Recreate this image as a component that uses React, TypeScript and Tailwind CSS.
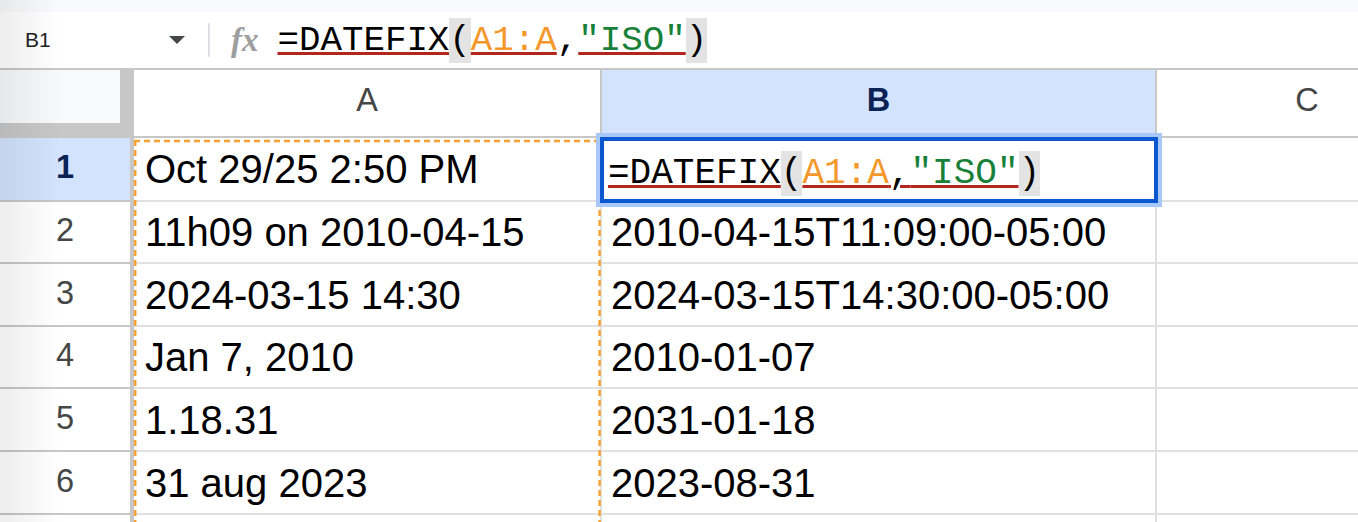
const ORANGE = "text-[#f4982c]";
const GREEN = "text-[#188038]";

function Formula({ size }: { size: "bar" | "cell" }) {
  const ul = "underline decoration-[#b3261e] decoration-[3px] underline-offset-[2px]";
  const paren = "inline-block bg-[#e3e3e3] leading-[45px]";
  return (
    <span className={`whitespace-pre font-['Liberation_Mono',monospace] ${size === "bar" ? "text-[35.8px]" : "text-[36px]"} leading-[45px] text-black`}>
      <span className={ul}>=DATEFIX</span>
      <span className={paren}>(</span>
      <span className={`${ul} ${ORANGE}`}>A1:A</span>
      <span className={size === "cell" ? ul : ""}>,</span>
      <span className={`${ul} ${GREEN}`}>"ISO"</span>
      <span className={paren}>)</span>
    </span>
  );
}

const rows = [
  { n: "1", a: "Oct 29/25 2:50 PM", b: null, h: "h-[64px]" },
  { n: "2", a: "11h09 on 2010-04-15", b: "2010-04-15T11:09:00-05:00", h: "h-[62px]" },
  { n: "3", a: "2024-03-15 14:30", b: "2024-03-15T14:30:00-05:00", h: "h-[63px]" },
  { n: "4", a: "Jan 7, 2010", b: "2010-01-07", h: "h-[62px]" },
  { n: "5", a: "1.18.31", b: "2031-01-18", h: "h-[63px]" },
  { n: "6", a: "31 aug 2023", b: "2023-08-31", h: "h-[63px]" },
  { n: "", a: "", b: "", h: "h-[63px]" },
];

export default function App() {
  return (
    <div className="relative h-[522px] w-[1358px] overflow-hidden bg-white font-['Liberation_Sans',Arial,sans-serif]">
      {/* top strip */}
      <div className="h-[12px] bg-[#f8fafd]" />

      {/* formula bar */}
      <div className="flex h-[58px] items-center border-b-2 border-[#c7c7c7] bg-white">
        <div className="flex w-[208px] shrink-0 items-center pl-[25px]">
          <span className="text-[21px] text-[#1f1f1f]">B1</span>
          <svg className="ml-[118px]" width="16" height="8" viewBox="0 0 16 8">
            <path d="M0 0 L16 0 L8 8 Z" fill="#444746" />
          </svg>
        </div>
        <div className="h-[34px] w-[2px] bg-[#dde1e6]" />
        <span className="ml-[21px] font-['Liberation_Serif',serif] text-[33px] font-bold italic leading-none text-[#9e9e9e]">fx</span>
        <div className="ml-[19px] flex items-center">
          <Formula size="bar" />
        </div>
      </div>

      {/* column headers */}
      <div className="flex h-[68px]">
        <div className="w-[134px] shrink-0 bg-[#c7c7c7]">
          <div className="h-[53px] w-[120px] bg-[#f8f9fa]" />
        </div>
        <div className="flex w-[468px] shrink-0 items-center justify-center border-r-2 border-b-2 border-[#c7c7c7] pb-[6px] text-[32.5px] text-[#444746]">A</div>
        <div className="flex w-[555px] shrink-0 items-center justify-center border-r-2 border-b-2 border-[#c7c7c7] bg-[#d3e3fd] pb-[6px] text-[32.5px] font-bold text-[#0b2255]">B</div>
        <div className="flex w-[300px] shrink-0 items-center justify-center border-b-2 border-[#c7c7c7] pb-[6px] text-[32.5px] text-[#444746]">C</div>
      </div>

      {/* rows */}
      {rows.map((r, i) => (
        <div key={i} className={`flex ${r.h}`}>
          <div
            className={`flex w-[134px] shrink-0 items-center justify-center border-r-4 border-b-2 border-[#c7c7c7] pb-[3px] text-[32.5px] ${
              r.n === "1" ? "bg-[#d3e3fd] font-bold text-[#0b2255]" : "text-[#444746]"
            }`}
          >
            {r.n}
          </div>
          <div className="flex w-[468px] shrink-0 items-center border-r-2 border-b-2 border-[#e1e1e1] pl-[11px] text-[40px] whitespace-nowrap text-black">
            {r.a}
          </div>
          <div className="flex w-[555px] shrink-0 items-center border-r-2 border-b-2 border-[#e1e1e1] pl-[9px] text-[40px] whitespace-nowrap text-black">
            {r.b === null ? <span className="-ml-[3px]"><Formula size="cell" /></span> : r.b}
          </div>
          <div className="w-[300px] shrink-0 border-b-2 border-[#e1e1e1]" />
        </div>
      ))}

      {/* referenced range A1:A */}
      <svg className="pointer-events-none absolute left-0 top-0" width="1358" height="522">
        <g stroke="#f7a034" strokeWidth="2.5" strokeDasharray="6 4" fill="none">
          <line x1="134" y1="141" x2="600" y2="141" />
          <line x1="135.2" y1="140" x2="135.2" y2="522" />
          <line x1="599.6" y1="140" x2="599.6" y2="522" />
        </g>
      </svg>

      {/* active cell */}
      <div className="pointer-events-none absolute left-[596px] top-[133px] h-[74px] w-[566px] border-4 border-[#a8c7fa]">
        <div className="h-full w-full border-4 border-[#0b57d0]" />
      </div>

      {/* left edge shade */}
      <div className="pointer-events-none absolute inset-y-0 left-0 w-[60px] bg-linear-to-r from-black/[0.07] to-transparent" />
    </div>
  );
}
